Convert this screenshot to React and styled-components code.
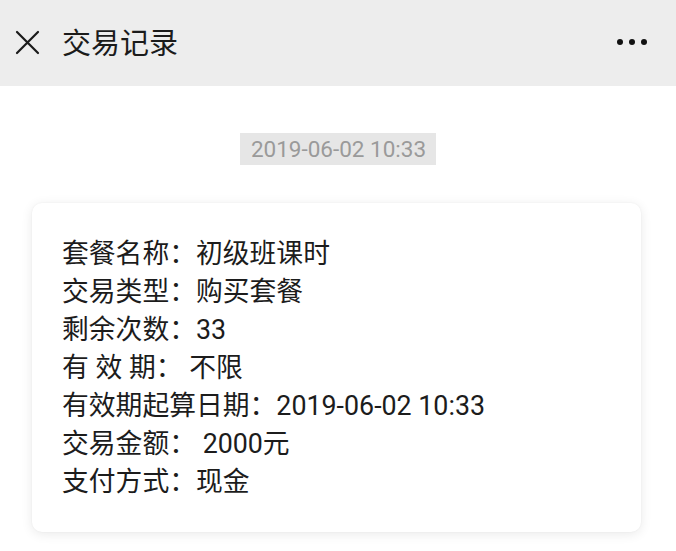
import React from "react";
import styled, { createGlobalStyle } from "styled-components";

const Global = createGlobalStyle`
  html, body { margin: 0; padding: 0; background: #ffffff; }
  body { font-family: Roboto, "Noto Sans CJK SC", sans-serif; }
`;

const Page = styled.div`
  width: 676px;
  min-height: 551px;
  background: #ffffff;
`;

const Header = styled.header`
  height: 86px;
  background: #ededed;
  display: flex;
  align-items: center;
  padding: 0 16px 0 15px;
  box-sizing: border-box;
`;

const CloseButton = styled.div`
  width: 25px;
  height: 25px;
  display: flex;
  margin-top: -2px;
`;

const Title = styled.h1`
  margin: 0 0 0 22px;
  font-family: "Noto Sans CJK SC", sans-serif;
  font-size: 29px;
  font-weight: 400;
  color: #1b1b1b;
  flex: 1;
  margin-top: -4px;
`;

const Dots = styled.div`
  display: flex;
  gap: 6px;
  margin-right: 13px;
  margin-top: -2px;
`;

const Dot = styled.span`
  width: 6px;
  height: 6px;
  border-radius: 50%;
  background: #111;
`;

const Body = styled.main`
  display: flex;
  flex-direction: column;
  align-items: center;
  padding-top: 47px;
`;

const Stamp = styled.div`
  background: #e6e6e6;
  color: #9a9a9a;
  font-family: Roboto, sans-serif;
  font-size: 22.5px;
  height: 32px;
  line-height: 32px;
  padding: 0 10px 0 11px;
  box-sizing: border-box;
`;

const Card = styled.section`
  align-self: flex-start;
  margin: 38px 0 0 32px;
  width: 609px;
  box-sizing: border-box;
  padding: 32px 30px 31px;
  background: #fff;
  border-radius: 10px;
  box-shadow: 0 2px 12px rgba(0, 0, 0, 0.09), 0 0 2px rgba(0, 0, 0, 0.05);
`;

const Row = styled.div`
  font-family: Roboto, "Noto Sans CJK SC", sans-serif;
  font-size: 26.8px;
  line-height: 38px;
  height: 38px;
  color: #1c1c1c;
  white-space: pre;
`;

const rows = [
  "套餐名称：初级班课时",
  "交易类型：购买套餐",
  "剩余次数：33",
  "有 效 期： 不限",
  "有效期起算日期：2019-06-02 10:33",
  "交易金额： 2000元",
  "支付方式：现金",
];

export default function App() {
  return (
    <Page>
      <Global />
      <Header>
        <CloseButton>
          <svg width="25" height="25" viewBox="0 0 25 25">
            <path d="M2 2 L23 23 M23 2 L2 23" stroke="#1a1a1a" strokeWidth="2.2" strokeLinecap="round" fill="none" />
          </svg>
        </CloseButton>
        <Title>交易记录</Title>
        <Dots>
          <Dot />
          <Dot />
          <Dot />
        </Dots>
      </Header>
      <Body>
        <Stamp>2019-06-02 10:33</Stamp>
        <Card>
          {rows.map((r) => (
            <Row key={r}>{r}</Row>
          ))}
        </Card>
      </Body>
    </Page>
  );
}
